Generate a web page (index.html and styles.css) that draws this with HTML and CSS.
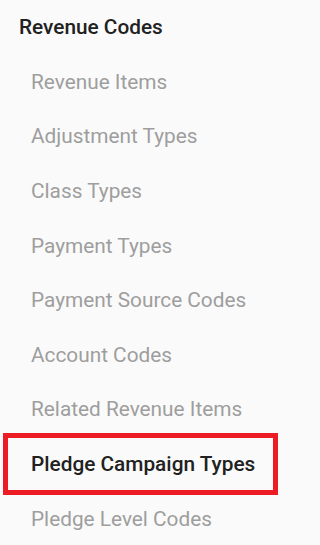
FILE: index.html
```html
<!DOCTYPE html>
<html lang="en">
<head>
<meta charset="utf-8">
<title>Revenue Codes</title>
<link rel="stylesheet" href="styles.css">
</head>
<body>
<nav class="menu">
  <div class="menu-title">Revenue Codes</div>
  <ul class="menu-list">
    <li class="menu-item">Revenue Items</li>
    <li class="menu-item">Adjustment Types</li>
    <li class="menu-item">Class Types</li>
    <li class="menu-item">Payment Types</li>
    <li class="menu-item">Payment Source Codes</li>
    <li class="menu-item">Account Codes</li>
    <li class="menu-item">Related Revenue Items</li>
    <li class="menu-item is-selected">Pledge Campaign Types</li>
    <li class="menu-item">Pledge Level Codes</li>
  </ul>
</nav>
</body>
</html>
```

FILE: styles.css
```css
html, body {
  margin: 0;
  padding: 0;
  background: #fafafa;
}

body {
  font-family: Roboto, "Liberation Sans", sans-serif;
  width: 285px;
  height: 545px;
  overflow: hidden;
}

.menu {
  display: flex;
  flex-direction: column;
}

.menu-title {
  height: 54.6px;
  display: flex;
  align-items: center;
  padding-left: 19px;
  font-size: 20.8px;
  font-weight: 500;
  color: #212121;
}

.menu-list {
  list-style: none;
  margin: 0;
  padding: 0;
  display: flex;
  flex-direction: column;
}

.menu-item {
  height: 54.6px;
  box-sizing: border-box;
  display: flex;
  align-items: center;
  padding-left: 31px;
  font-size: 20.8px;
  color: #9e9e9e;
  white-space: nowrap;
}

.menu-item.is-selected {
  height: 62px;
  margin: -3.7px 7px -3.7px 3px;
  border: 5px solid #ed1c24;
  padding-left: 23px;
  color: #212121;
  font-weight: 500;
}
```
